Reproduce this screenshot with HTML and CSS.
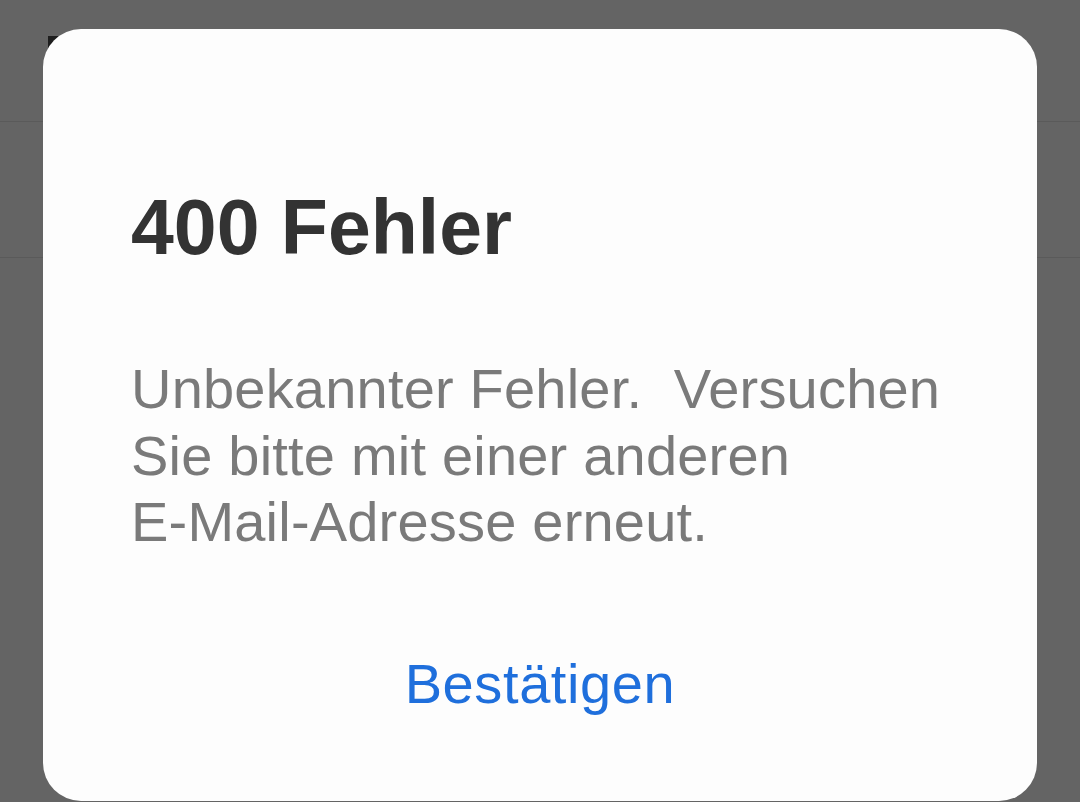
FILE: index.html
```html
<!DOCTYPE html>
<html lang="de">
<head>
<meta charset="utf-8">
<title>400 Fehler</title>
<link rel="stylesheet" href="styles.css">
</head>
<body>
<div class="page">
  <div class="topbar"><span class="back-mark"></span></div>
  <div class="row"></div>
</div>
<div class="dialog" role="alertdialog">
  <h1 class="dialog-title">400 Fehler</h1>
  <p class="dialog-text">Unbekannter Fehler.&nbsp; Versuchen Sie bitte mit einer anderen <span class="nowrap">E-Mail-Adresse</span> erneut.</p>
  <div class="dialog-actions"><button class="dialog-btn">Bestätigen</button></div>
</div>
</body>
</html>
```
FILE: styles.css
```css
html, body {
  margin: 0;
  padding: 0;
}
body {
  width: 1080px;
  height: 802px;
  overflow: hidden;
  background: #646464;
  font-family: "Liberation Sans", Arial, sans-serif;
  position: relative;
}
.page {
  display: flex;
  flex-direction: column;
}
.topbar {
  height: 122px;
  border-bottom: 1px solid #5a5a5a;
  box-sizing: border-box;
  padding: 36px 0 0 48px;
}
.back-mark {
  display: block;
  width: 30px;
  height: 30px;
  background: #1e1e1e;
}
.row {
  height: 135px;
  border-bottom: 1px solid #5a5a5a;
}
.dialog {
  position: absolute;
  left: 43px;
  top: 29px;
  width: 994px;
  height: 772px;
  box-sizing: border-box;
  background: #fdfdfd;
  border-radius: 38px;
  padding: 159px 88px 0 88px;
}
.dialog-title {
  margin: 0;
  font-size: 77px;
  line-height: 78px;
  font-weight: 700;
  color: #333333;
}
.dialog-text {
  margin: 90px 0 0 0;
  font-size: 56px;
  line-height: 66.5px;
  letter-spacing: 0.2px;
  color: #7a7a7a;
  max-width: 830px;
}
.nowrap {
  white-space: nowrap;
}
.dialog-actions {
  margin-top: 95px;
  display: flex;
  justify-content: center;
}
.dialog-btn {
  border: 0;
  background: none;
  padding: 0;
  font-family: inherit;
  font-size: 56px;
  line-height: 66px;
  letter-spacing: 0.6px;
  color: #1f6fdc;
}
```
